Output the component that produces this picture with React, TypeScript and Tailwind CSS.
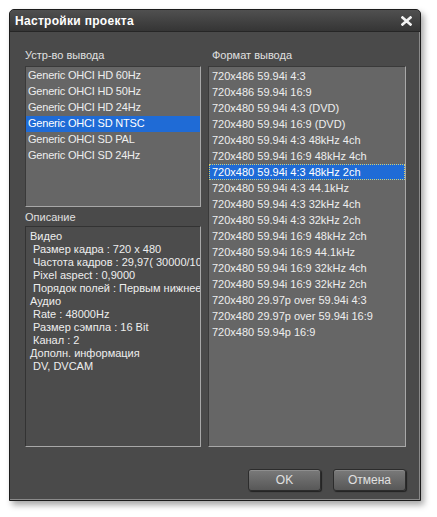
import { useState } from "react";

const devices = [
  "Generic OHCI HD 60Hz",
  "Generic OHCI HD 50Hz",
  "Generic OHCI HD 24Hz",
  "Generic OHCI SD NTSC",
  "Generic OHCI SD PAL",
  "Generic OHCI SD 24Hz",
];

const formats = [
  "720x486 59.94i 4:3",
  "720x486 59.94i 16:9",
  "720x480 59.94i 4:3 (DVD)",
  "720x480 59.94i 16:9 (DVD)",
  "720x480 59.94i 4:3 48kHz 4ch",
  "720x480 59.94i 16:9 48kHz 4ch",
  "720x480 59.94i 4:3 48kHz 2ch",
  "720x480 59.94i 4:3 44.1kHz",
  "720x480 59.94i 4:3 32kHz 4ch",
  "720x480 59.94i 4:3 32kHz 2ch",
  "720x480 59.94i 16:9 48kHz 2ch",
  "720x480 59.94i 16:9 44.1kHz",
  "720x480 59.94i 16:9 32kHz 4ch",
  "720x480 59.94i 16:9 32kHz 2ch",
  "720x480 29.97p over 59.94i 4:3",
  "720x480 29.97p over 59.94i 16:9",
  "720x480 59.94p 16:9",
];

// indent: true -> one leading space, as the info panel prints it
const description: [string, boolean][] = [
  ["Видео", false],
  ["Размер кадра : 720 x 480", true],
  ["Частота кадров : 29,97( 30000/1001)", true],
  ["Pixel aspect : 0,9000", true],
  ["Порядок полей : Первым нижнее", true],
  ["Аудио", false],
  ["Rate : 48000Hz", true],
  ["Размер сэмпла : 16 Bit", true],
  ["Канал : 2", true],
  ["Дополн. информация", false],
  ["DV, DVCAM", true],
];

function CloseIcon() {
  return (
    <svg width="11" height="10" viewBox="0 0 11 10">
      <path d="M1.5 1.5 L9.5 8.5 M9.5 1.5 L1.5 8.5" stroke="#f2f2f2" strokeWidth="2.6" strokeLinecap="square" />
    </svg>
  );
}

function Button({ label }: { label: string }) {
  return (
    <button className="w-[73px] h-[22px] rounded-[3px] border border-[#2c2c2c] bg-gradient-to-b from-[#7a7a7a] to-[#585858] text-[12px] text-[#e0e0e0] shadow-[inset_0_1px_0_#8e8e8e,1px_1px_1px_#222]">
      {label}
    </button>
  );
}

export default function App() {
  const [device, setDevice] = useState(3);
  const [format, setFormat] = useState(6);

  return (
    <div
      className="w-[437px] h-[517px] bg-white pt-[9px] pl-[9px]"
      style={{ fontFamily: '"Liberation Sans", Arial, sans-serif' }}
    >
      <div className="w-[412px] h-[492px] flex flex-col rounded-t-[5px] border border-[#1c1c1c] bg-[#4a4a4a] shadow-[3px_4px_6px_rgba(0,0,0,0.35)]">
        {/* title bar */}
        <div className="h-[22px] flex items-center justify-between pl-[5px] pr-[8px] rounded-t-[4px] bg-gradient-to-b from-[#505050] to-[#353535] border-b border-[#262626]">
          <span className="text-[12px] font-bold text-white tracking-[0.3px]">Настройки проекта</span>
          <CloseIcon />
        </div>

        <div className="flex-1 flex flex-col border-r border-b border-[#8a8a8a] pl-[15px] pr-[13px]">
          <div className="flex gap-[7px] pt-[16px]">
            {/* left column */}
            <div className="w-[176px] flex flex-col">
              <div className="h-[18px] text-[11px] text-[#e0e0e0] leading-[14px]">Устр-во вывода</div>
              <div className="h-[141px] bg-[#666666] border border-t-[#3a3a3a] border-l-[#3a3a3a] border-r-[#a8a8a8] border-b-[#a8a8a8] pt-[1px]">
                {devices.map((d, i) => (
                  <div
                    key={d}
                    onClick={() => setDevice(i)}
                    className={`h-[16px] leading-[15px] pl-[2px] text-[11px] tracking-[-0.2px] whitespace-nowrap ${
                      i === device ? "bg-[#1f6bd6] text-white" : "text-[#eeeeee]"
                    }`}
                  >
                    {d}
                  </div>
                ))}
              </div>
              <div className="h-[18px] mt-[1px] text-[11px] text-[#e0e0e0] leading-[18px]">Описание</div>
              <div className="h-[221px] bg-[#4c4c4c] border border-t-[#333333] border-l-[#333333] border-r-[#a8a8a8] border-b-[#a8a8a8] pt-[3px] pl-[4px] overflow-hidden">
                {description.map(([t, indent]) => (
                  <div key={t} className={`h-[13px] leading-[13px] text-[11px] text-[#eeeeee] whitespace-nowrap ${indent ? "pl-[3px]" : ""}`}>
                    {t}
                  </div>
                ))}
              </div>
            </div>

            {/* right column */}
            <div className="w-[199px] flex flex-col">
              <div className="h-[18px] text-[11px] text-[#e0e0e0] leading-[14px] pl-[4px]">Формат вывода</div>
              <div className="h-[381px] bg-[#666666] border border-t-[#3a3a3a] border-l-[#3a3a3a] border-r-[#a8a8a8] border-b-[#a8a8a8] pt-[1px]">
                {formats.map((f, i) => (
                  <div
                    key={f}
                    onClick={() => setFormat(i)}
                    className={`h-[16px] leading-[14px] pl-[2px] text-[11px] whitespace-nowrap border border-dotted ${
                      i === format ? "bg-[#1f6bd6] text-white border-[#d8cf6a]" : "text-[#eeeeee] border-transparent"
                    }`}
                  >
                    {f}
                  </div>
                ))}
              </div>
            </div>
          </div>

          <div className="flex justify-end gap-[12px] mt-[22px]">
            <Button label="OK" />
            <Button label="Отмена" />
          </div>
        </div>
      </div>
    </div>
  );
}
